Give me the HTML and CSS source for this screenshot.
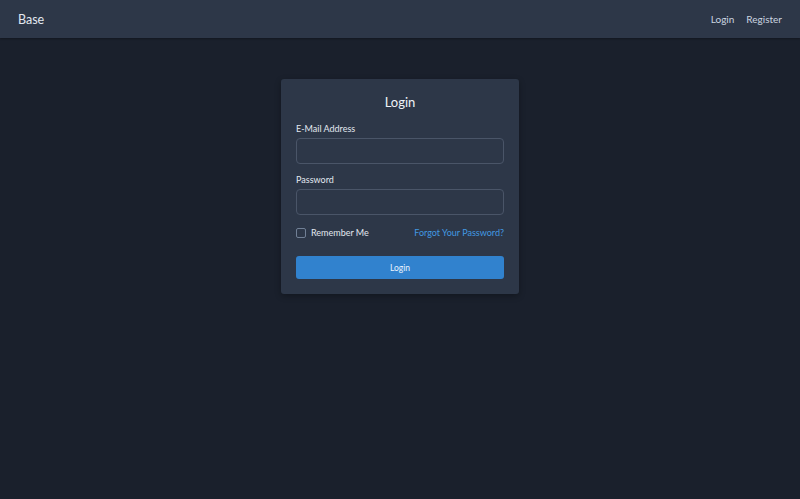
FILE: index.html
```html
<!DOCTYPE html>
<html>
<head>
<meta charset="utf-8">
<link rel="stylesheet" href="styles.css">
</head>
<body>
<nav class="navbar">
  <a class="brand" href="#">Base</a>
  <div class="nav-links">
    <a href="#">Login</a>
    <a href="#">Register</a>
  </div>
</nav>
<main class="main">
  <div class="card">
    <h1 class="title">Login</h1>
    <label class="label">E-Mail Address</label>
    <input class="input" type="email">
    <label class="label">Password</label>
    <input class="input" type="password">
    <div class="row">
      <label class="remember"><span class="check"></span>Remember Me</label>
      <a class="forgot" href="#">Forgot Your Password?</a>
    </div>
    <button class="btn">Login</button>
  </div>
</main>
</body>
</html>
```
FILE: styles.css
```css
* { box-sizing: border-box; }
html, body { margin: 0; height: 100%; }
body {
  background: #1a202c;
  font-family: "Lato", "Noto Sans", sans-serif;
  color: #e2e8f0;
}
a { text-decoration: none; }
.navbar {
  height: 38px;
  background: #2d3748;
  display: flex;
  align-items: center;
  justify-content: space-between;
  padding: 0 18px;
  box-shadow: 0 1px 2px rgba(0,0,0,0.3);
}
.brand { color: #e2e8f0; font-size: 12.5px; }
.nav-links { display: flex; gap: 12px; }
.nav-links a { color: #cbd5e0; font-size: 10px; }
.main { display: flex; justify-content: center; padding-top: 41px; }
.card {
  width: 238px;
  background: #2d3748;
  border-radius: 3px;
  padding: 15px 15px 15px;
  display: flex;
  flex-direction: column;
  box-shadow: 0 2px 6px rgba(0,0,0,0.3);
}
.title {
  margin: 0 0 13px;
  text-align: center;
  font-size: 13px;
  font-weight: 400;
  color: #edf2f7;
}
.label { font-size: 9px; color: #e2e8f0; margin-bottom: 4px; }
.input {
  height: 26px;
  background: #2d3748;
  border: 1px solid #4a5568;
  border-radius: 4px;
  margin-bottom: 10px;
}
.row {
  display: flex;
  justify-content: space-between;
  align-items: center;
  margin-top: 2px;
  margin-bottom: 18px;
}
.remember { display: flex; align-items: center; font-size: 9px; color: #e2e8f0; }
.check {
  width: 10px; height: 10px;
  border: 1px solid #718096;
  border-radius: 2px;
  margin-right: 5px;
}
.forgot { color: #4299e1; font-size: 9px; }
.btn {
  height: 23px;
  background: #3182ce;
  border: none;
  border-radius: 3px;
  color: #ebf4ff;
  font-family: inherit;
  font-size: 8.5px;
}
```
